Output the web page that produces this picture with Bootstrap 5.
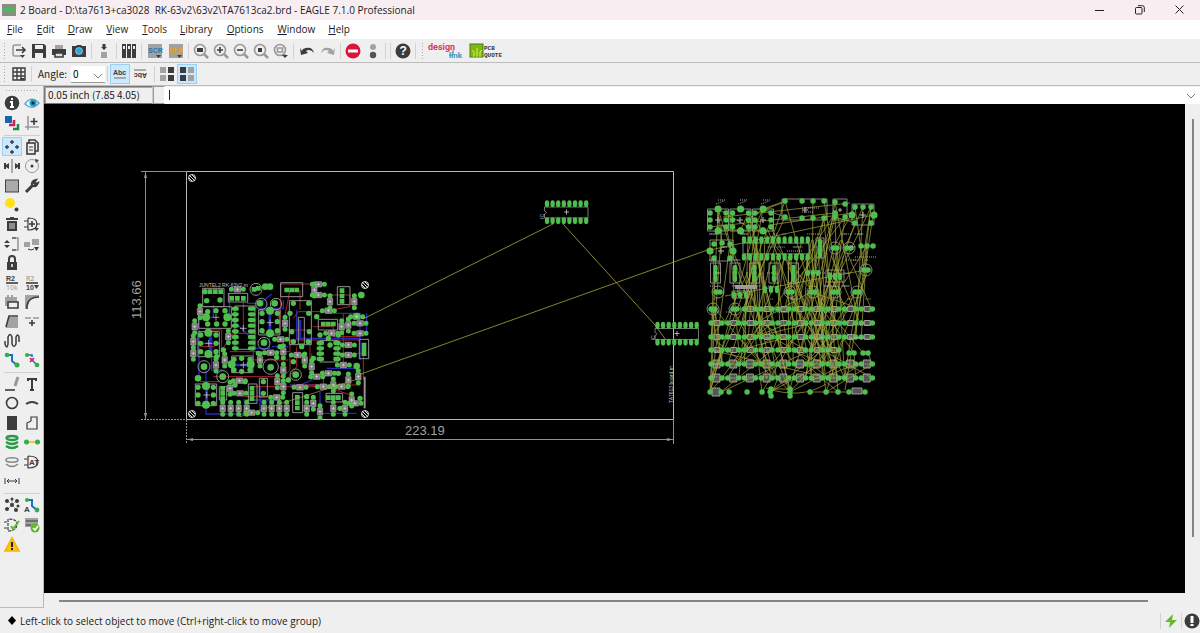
<!DOCTYPE html>
<html lang="en">
<head>
<meta charset="utf-8">
<meta name="viewport" content="width=device-width, initial-scale=1">
<title>2 Board - EAGLE 7.1.0 Professional</title>
<link href="https://cdn.jsdelivr.net/npm/bootstrap@5.3.0/dist/css/bootstrap.min.css" rel="stylesheet">
<style>
body{font-family:"Open Sans","Noto Sans",sans-serif;font-size:10px;line-height:14px;color:#1b1b1b;background:#efefef}
.titlebar{background:#f8eef2;height:20px;font-size:10px;padding-left:2px}
.winbtn{width:40px;height:20px}
.menus{background:#fff;height:19px;font-size:10px;padding:0 0 2px 3px}
.menus button{padding:0 4px;margin-right:6px}
.menus button:nth-child(3n+2){margin-right:5px}
.plain{border:0;background:none;color:inherit;padding:0;display:flex;align-items:center;justify-content:center}
.tools{height:24px;border-bottom:1px solid #bdbdbd;background:#efefef}
.tools.options{height:23px}
.tools .plain{width:20px;height:20px}
.tools .wide{width:21px}
.tools .on,.palette .on{background:#cce8ff;box-shadow:inset 0 0 0 1px #99d1f5}
.split{width:1px;height:16px;background:#d2d2d2;margin:0 2px}
.grip{width:3px;height:18px;margin:0 3px;background:radial-gradient(circle,#aaa 1px,transparent 1px) 0 0/3px 3px}
.gripx{height:3px;margin:3px 3px 0;background:radial-gradient(circle,#aaa 1px,transparent 1px) 0 0/3px 3px}
.palette{width:44px;border-right:1px solid #bbb;border-bottom:1px solid #bbb;padding:0 1px 0 2px}
.group{display:grid;grid-template-columns:1fr 1fr;grid-auto-rows:1fr;margin-top:1px}
.g1{height:40px}.g2{height:233px}.g3{height:117px}.g4{height:60px}
.rule{height:1px;background:#cfcfcf;margin:2px 2px 0}
.jp{font-family:"Noto Sans CJK JP",sans-serif;font-size:10px}
.angle{width:34px;height:17px;border:0;border-bottom:1px solid #999;background:#fff;padding:0 2px;appearance:none;font-size:10px}
.pos{height:18px;width:109px;border:1px solid #777;border-right-color:#ccc;box-shadow:inset 1px 1px #aaa;padding-left:3px;line-height:15px}
.mini{width:12px;height:18px;border:1px solid #999;border-right-color:#fff}
.caret{width:1px;height:10px;background:#222}
.cmd{border:0;outline:0;height:16px;font-size:10px;min-width:0}
.thumbx{height:2px;background:#858585;margin:7px 52px 6px 15px}
.thumby{width:2px;background:#858585;margin:15px 6px 56px 7px}
.status{height:25px}
svg{display:block}
.ic{width:16px;height:16px;fill:none;stroke:#3c3c3c;stroke-width:1.6;overflow:visible}
.f{fill:#3c3c3c;stroke:none}.g{stroke:#999}.gf{fill:#a2a2a2;stroke:none}.n{fill:#2fae4a;stroke:none}.b{stroke:#1d6fc0}.t{stroke:none;font-family:"Liberation Sans",sans-serif;font-weight:700;fill:#3c3c3c}
.pad{stroke:#4fbe4f;fill:none}.out{stroke:#929292;fill:none}.air{stroke:#a5a73c;fill:none}.top{stroke:#a82525;fill:none}.bot{stroke:#2828b4;fill:none}
.dim{fill:#a0a0a0;font:13px "Liberation Sans",sans-serif}
.tiny{fill:#c0c0c0;font:5px "Liberation Sans",sans-serif}
</style>
</head>
<body class="vh-100 d-flex flex-column overflow-hidden">
<header class="titlebar d-flex align-items-center flex-shrink-0">
<svg class="me-1" width="14" height="12" viewBox="0 0 14 12" aria-hidden="true"><rect width="14" height="12" fill="#858f85"/><text x="1" y="8" font-size="6" font-weight="700" fill="#43c743" font-family="Liberation Sans">BRD</text></svg>
<span class="text-nowrap">2 Board - D:\ta7613+ca3028&nbsp; RK-63v2\63v2\TA7613ca2.brd - EAGLE 7.1.0 Professional</span>
<div class="d-flex ms-auto">
<button class="plain winbtn" aria-label="Minimize"><svg width="10" height="10" stroke="#222"><path d="M0 5.500h9"/></svg></button>
<button class="plain winbtn" aria-label="Restore"><svg width="10" height="10" stroke="#222" fill="none"><rect x=".5" y="2.500" width="6.500" height="6.500" rx="1"/><path d="M3 .7h4.500q1.800 0 1.800 1.800V7"/></svg></button>
<button class="plain winbtn" aria-label="Close"><svg width="10" height="10" stroke="#222"><path d="M.5 .5l8 8M8.500 .5l-8 8"/></svg></button>
</div>
</header>
<nav class="menus d-flex align-items-center flex-shrink-0">
<button class="plain"><span><u>F</u>ile</span></button><button class="plain"><span><u>E</u>dit</span></button><button class="plain"><span><u>D</u>raw</span></button><button class="plain"><span><u>V</u>iew</span></button><button class="plain"><span><u>T</u>ools</span></button><button class="plain"><span><u>L</u>ibrary</span></button><button class="plain"><span><u>O</u>ptions</span></button><button class="plain"><span><u>W</u>indow</span></button><button class="plain"><span><u>H</u>elp</span></button>
</nav>
<div class="tools d-flex align-items-center flex-shrink-0" role="toolbar">
<i class="grip"></i>
<button class="plain" aria-label="Open"><svg class="ic" viewBox="0 0 16 16"><path class="g" d="M10 2H4q-2 0-2 2v7q0 2 2 2h6"/><path d="M5 7h8M11 4l3 3-3 3"/><path class="f" d="M9 12h5l-2.500 3z"/></svg></button>
<button class="plain" aria-label="Save"><svg class="ic" viewBox="0 0 16 16"><path class="f" d="M1 1h12l2 2v12H1z"/><path d="M4 2h8v4H4zM4 10h8v5H4z" fill="#eee" stroke="none"/></svg></button>
<button class="plain" aria-label="Print"><svg class="ic" viewBox="0 0 16 16"><path class="gf" d="M4 2h8v4H4z"/><path class="f" d="M1 6h14v6H1z"/><path d="M4 10h8v4H4z" fill="#ddd"/></svg></button>
<button class="plain" aria-label="CAM"><svg class="ic" viewBox="0 0 16 16"><path class="f" d="M1 3h4l1-1h4l1 1h4v11H1z"/><circle cx="8" cy="8" r="3.500" fill="#27a8e0" stroke="#eee" stroke-width=".5"/></svg></button>
<i class="split"></i>
<button class="plain" aria-label="Switch to schematic"><svg class="ic" viewBox="0 0 16 16"><path class="gf" d="M5 9h6v6H5z"/><path class="f" d="M6.500 1h3v3H11L8 7 5 4h1.500z"/></svg></button>
<i class="split"></i>
<button class="plain" aria-label="Use library"><svg class="ic" viewBox="0 0 16 16"><path class="f" d="M1 1h4v14H1zM6 1h4v14H6zM11 1h4v14h-4z"/><path d="M3 3v3M8 3v3M13 3v3" stroke="#eee" stroke-width="2"/></svg></button>
<i class="split"></i>
<button class="plain wide" aria-label="Script"><svg class="ic" viewBox="0 0 16 16"><path class="gf" d="M1 1h14v14H1z"/><text class="t" x="1" y="10" font-size="7" style="fill:#2277b0">SCR</text><path class="f" d="M9 12h5l-2.500 3z"/></svg></button>
<button class="plain wide" aria-label="ULP"><svg class="ic" viewBox="0 0 16 16"><path class="gf" d="M1 1h14v14H1z"/><text class="t" x="1" y="10" font-size="7" style="fill:#f09a20">ULP</text><path class="f" d="M9 12h5l-2.500 3z"/></svg></button>
<i class="split"></i>
<button class="plain" aria-label="Fit"><svg class="ic" viewBox="0 0 16 16"><circle class="g" cx="7" cy="7" r="5.500"/><path class="g" d="M11 11l4 4" stroke-width="2.500"/><path class="f" d="M4 5h6v4H4z"/></svg></button>
<button class="plain" aria-label="Zoom in"><svg class="ic" viewBox="0 0 16 16"><circle class="g" cx="7" cy="7" r="5.500"/><path class="g" d="M11 11l4 4" stroke-width="2.500"/><path d="M4 7h6M7 4v6"/></svg></button>
<button class="plain" aria-label="Zoom out"><svg class="ic" viewBox="0 0 16 16"><circle class="g" cx="7" cy="7" r="5.500"/><path class="g" d="M11 11l4 4" stroke-width="2.500"/><path d="M4 7h6"/></svg></button>
<button class="plain" aria-label="Redraw"><svg class="ic" viewBox="0 0 16 16"><circle class="g" cx="7" cy="7" r="5.500"/><path class="g" d="M11 11l4 4" stroke-width="2.500"/><path class="f" d="M5 5h4v4H5z"/></svg></button>
<button class="plain" aria-label="Select area"><svg class="ic" viewBox="0 0 16 16"><circle class="g" cx="7" cy="7" r="5.500"/><path class="g" d="M4.500 5h5v4h-5zM11 11l2 2"/><path class="f" d="M9 12h6l-3 3z"/></svg></button>
<i class="split"></i>
<button class="plain wide" aria-label="Undo"><svg class="ic" viewBox="0 0 16 16"><path class="f" d="M1 5l1 7 7-2-2-2q4-3 8 2-2-8-11-4L3 8z"/></svg></button>
<button class="plain wide" aria-label="Redo"><svg class="ic" viewBox="0 0 16 16"><path class="gf" d="M15 5l-1 7-7-2 2-2Q5 5 1 10q2-8 11-4l1 2z"/></svg></button>
<i class="split"></i>
<button class="plain" aria-label="Stop"><svg class="ic" viewBox="0 0 16 16"><circle cx="8" cy="8" r="7.500" fill="#dc143c" stroke="none"/><path d="M3 8h10" stroke="#fff" stroke-width="3"/></svg></button>
<button class="plain" aria-label="Go"><svg class="ic" viewBox="0 0 16 16"><circle class="gf" cx="8" cy="4" r="3"/><circle cx="8" cy="12" r="3.200" fill="#555" stroke="none"/></svg></button>
<i class="split"></i><i class="split"></i>
<button class="plain" aria-label="Help"><svg class="ic" viewBox="0 0 16 16"><circle class="f" cx="8" cy="8" r="7.500"/><text class="t" x="4.500" y="12" font-size="12" style="fill:#fff">?</text></svg></button>
<i class="split"></i><i class="grip"></i>
<a href="#" class="me-1" aria-label="design link"><svg width="38" height="20" viewBox="0 0 38 20" font-family="Roboto" font-weight="700"><text x="1" y="9" font-size="9" fill="#d63a60">design</text><path d="M26 9v5h-4" stroke="#d63a60" fill="none"/><text x="22" y="17" font-size="8" fill="#3c9abf">link</text></svg></a>
<a href="#" aria-label="PCB quote"><svg width="34" height="16" viewBox="0 0 34 16"><rect x="1" y="1" width="13" height="13" fill="#7cba10" stroke="#3e7a20"/><path d="M5 14V9L3 7M8 14V5M11 14V9l2-2" stroke="#e6ef55" fill="none"/><text x="15" y="7" font-size="6" font-family="Liberation Mono" font-weight="700" fill="#333">PCB</text><text x="15" y="14" font-size="6" font-family="Liberation Mono" font-weight="700" fill="#333">QUOTE</text></svg></a>
</div>
<div class="tools options d-flex align-items-center flex-shrink-0 jp" role="toolbar">
<i class="grip"></i>
<button class="plain" aria-label="Grid"><svg class="ic" viewBox="0 0 16 16"><path d="M2 2h12v12H2zM6 2v12M10 2v12M2 6h12M2 10h12" stroke-width="1.400"/><path class="f" d="M9 12h5l-2.500 3z"/></svg></button>
<i class="split"></i>
<label for="angle" class="ms-1 me-1">Angle:</label>
<div class="position-relative"><select id="angle" class="angle jp"><option>0</option></select><svg class="position-absolute end-0 top-50" width="12" height="5" fill="none" stroke="#777" aria-hidden="true"><path d="M1 0l4 4 4-4"/></svg></div>
<i class="split"></i>
<button class="plain on" aria-label="Text upright"><svg class="ic" viewBox="0 0 16 16"><text class="t" x="1" y="9" font-size="7">Abc</text><path class="g" d="M2 12h12"/></svg></button>
<button class="plain" aria-label="Spin text"><svg class="ic" viewBox="0 0 16 16"><text class="t" x="-15" y="-7" font-size="7" transform="rotate(180)">Abc</text><path class="g" d="M2 4h12"/></svg></button>
<i class="split ms-1"></i>
<button class="plain" aria-label="Mirror off"><svg class="ic" viewBox="0 0 16 16"><path class="gf" d="M1 1h6v6H1zM1 9h6v6H1z"/><path class="f" d="M9 1h6v6H9zM9 9h6v6H9z"/></svg></button>
<button class="plain on" aria-label="Mirror on"><svg class="ic" viewBox="0 0 16 16"><path class="f" d="M1 1h6v6H1zM1 9h6v6H1z"/><path class="gf" d="M9 1h6v6H9zM9 9h6v6H9z"/></svg></button>
</div>
<main class="d-flex flex-grow-1 overflow-hidden">
<aside class="palette flex-shrink-0">
<div class="gripx"></div>
<div class="group g1">
<button class="plain" aria-label="Info"><svg class="ic" viewBox="0 0 16 16"><circle class="f" cx="8" cy="8" r="7.300"/><path d="M8 3v2M6 7h2v5M6 12h4" stroke="#fff" stroke-width="2"/></svg></button>
<button class="plain" aria-label="Show"><svg class="ic" viewBox="0 0 16 16"><path d="M1 9q6-9 14-1-7 8-14 1z" fill="#fff" stroke="#67a9c8"/><circle cx="9" cy="8" r="3.500" fill="#1a9bd0" stroke="none"/><circle cx="9" cy="8" r="1.500" fill="#123" stroke="none"/></svg></button>
<button class="plain" aria-label="Display"><svg class="ic" viewBox="0 0 16 16"><path d="M1 1h7v7H1z" fill="#1763aa" stroke="none"/><path d="M10 5v5H5" stroke="#d41c50" stroke-width="2.500"/><path d="M14 9v5H9" stroke="#178b44" stroke-width="2.500"/></svg></button>
<button class="plain" aria-label="Mark"><svg class="ic" viewBox="0 0 16 16"><path class="g" d="M4 1v14M1 12h14"/><path d="M10 3v7M6.500 6.500h7"/></svg></button>
</div>
<div class="rule"></div>
<div class="group g2">
<button class="plain on" aria-label="Move"><svg class="ic" viewBox="0 0 16 16"><path d="M8 1v4M6 3h4M8 11v4M6 13h4M1 8h4M3 6v4M11 8h4M13 6v4" stroke-width="1.400"/></svg></button>
<button class="plain" aria-label="Copy"><svg class="ic" viewBox="0 0 16 16"><path d="M5 4V1h6l3 3v8h-3"/><rect x="3" y="4" width="8" height="11"/><path d="M5 8h4M5 11h4" stroke-width="1"/></svg></button>
<button class="plain" aria-label="Mirror"><svg class="ic" viewBox="0 0 16 16"><path class="g" d="M8 1v14"/><path class="f" d="M0 5h2v2l3-2v6L2 9v2H0zM16 5h-2v2l-3-2v6l3-2v2h2z"/></svg></button>
<button class="plain" aria-label="Rotate"><svg class="ic" viewBox="0 0 16 16"><circle class="g" cx="8" cy="8" r="6.500" stroke-width="1"/><circle class="f" cx="8" cy="8" r="1.500"/><path class="f" d="M11 1l4 1-3 3z"/></svg></button>
<button class="plain" aria-label="Group"><svg class="ic" viewBox="0 0 16 16"><rect x="1.500" y="2" width="13" height="12" fill="#aaa" stroke="#444" stroke-width="1"/></svg></button>
<button class="plain" aria-label="Change"><svg class="ic" viewBox="0 0 16 16"><path d="M2 14l7-7" stroke-width="3"/><path d="M14 5q-2 5-6 2-1-4 4-5l-2 3 1 1z" stroke-width="2"/></svg></button>
<button class="plain" aria-label="Paste"><svg class="ic" viewBox="0 0 16 16"><circle cx="6" cy="6" r="5" fill="#ffdf20" stroke="none"/><circle class="f" cx="12.500" cy="12.500" r="2"/></svg></button><span></span>
<button class="plain" aria-label="Delete"><svg class="ic" viewBox="0 0 16 16"><path class="f" d="M3 5h10v10H3zM2 2h12v2H2zM6 1h4v2H6z"/><path d="M6 7v6M8 7v6M10 7v6" stroke="#ddd" stroke-width="1"/></svg></button>
<button class="plain" aria-label="Add"><svg class="ic" viewBox="0 0 16 16"><path d="M4 2v12q9 0 9-6T4 2M0 5h4M0 11h4M12 8h4" stroke-width="1.200"/><path d="M8 5v6M5 8h6"/><path class="f" d="M10 12h5l-2.500 3z"/></svg></button>
<button class="plain" aria-label="Pinswap"><svg class="ic" viewBox="0 0 16 16"><path class="f" d="M0 7l3-3 3 3zM0 9l3 3 3-3z"/><path class="g" d="M8 2h6v12H8"/><path d="M8 2h4M8 14h4" stroke-width="1"/></svg></button>
<button class="plain" aria-label="Replace"><svg class="ic" viewBox="0 0 16 16"><path class="gf" d="M0 6h6v5H0zM8 3h7v6H8z"/><path d="M4 13q3 2 6 0" stroke-width="1"/><path class="f" d="M10 11h5l-2.500 4z"/></svg></button>
<button class="plain" aria-label="Lock"><svg class="ic" viewBox="0 0 16 16"><path d="M5 8V4q0-3 3-3t3 3v4" stroke-width="2"/><path class="f" d="M3 7h10v8H3z"/><path d="M8 9v3" stroke="#eee"/></svg></button><span></span>
<button class="plain" aria-label="Name"><svg class="ic" viewBox="0 0 16 16"><text class="t" x="2" y="6" font-size="7">R2</text><path d="M2 8h12"/><text x="2" y="15" font-size="7" fill="#999" stroke="none">10k</text></svg></button>
<button class="plain" aria-label="Value"><svg class="ic" viewBox="0 0 16 16"><text x="2" y="6" font-size="7" fill="#888" stroke="none">R2</text><path d="M2 8h12"/><text class="t" x="2" y="15" font-size="7">10</text><path class="f" d="M10 10h5l-2.500 4z"/></svg></button>
<button class="plain" aria-label="Smash"><svg class="ic" viewBox="0 0 16 16"><path class="gf" d="M1 3h12v9H1zM3 1h2v2H3zM7 1h2v2H7z"/><path d="M4 8h10v6H4z" fill="#eee"/></svg></button>
<button class="plain" aria-label="Miter"><svg class="ic" viewBox="0 0 16 16"><path class="gf" d="M1 1h14v2Q4 3 3 15H1z"/><path d="M3 15V12Q4 3 15 3"/></svg></button>
<button class="plain" aria-label="Split"><svg class="ic" viewBox="0 0 16 16"><path class="gf" d="M5 4h9v11H2z"/><path d="M2 14L5 3l9 0"/></svg></button>
<button class="plain" aria-label="Optimize"><svg class="ic" viewBox="0 0 16 16"><path class="g" d="M1 5h6M9 5h6"/><path d="M8 7v6M5 10h6"/></svg></button>
<button class="plain" aria-label="Meander"><svg class="ic" viewBox="0 0 16 16"><path d="M1 8v3q2 6 3 0V4q2-5 4 0v7q2 5 4 0V4q2-4 3 0v5" stroke-width="1.500"/></svg></button><span></span>
<button class="plain" aria-label="Route"><svg class="ic" viewBox="0 0 16 16"><path class="b" d="M3 3h5v6l5 4" stroke-width="2"/><circle class="n" cx="3" cy="3" r="2.300"/><circle class="n" cx="13" cy="13" r="2.500"/></svg></button>
<button class="plain" aria-label="Ripup"><svg class="ic" viewBox="0 0 16 16"><path class="b" d="M3 3h5v2M10 10l3 3"/><path d="M6 6l4 4M10 6l-4 4" stroke="#d41c50"/><circle class="n" cx="3" cy="3" r="2"/><circle class="n" cx="13" cy="13" r="2.300"/></svg></button>
</div>
<div class="rule"></div>
<div class="group g3">
<button class="plain" aria-label="Line"><svg class="ic" viewBox="0 0 16 16"><path d="M1 14h10"/><path class="g" d="M11 10l3-9" stroke-width="3"/></svg></button>
<button class="plain" aria-label="Text"><svg class="ic" viewBox="0 0 16 16"><path d="M4 5V3h8v2M8 3v11M6 14h4" stroke-width="2"/></svg></button>
<button class="plain" aria-label="Circle"><svg class="ic" viewBox="0 0 16 16"><circle cx="8" cy="8" r="5.500"/></svg></button>
<button class="plain" aria-label="Arc"><svg class="ic" viewBox="0 0 16 16"><path d="M2 9q6-4 12 0" stroke-width="2"/></svg></button>
<button class="plain" aria-label="Rectangle"><svg class="ic" viewBox="0 0 16 16"><path class="f" d="M3 1h10v14H3z"/></svg></button>
<button class="plain" aria-label="Polygon"><svg class="ic" viewBox="0 0 16 16"><path d="M3 14V8l4-2V2h6v12z" stroke-width="1.200"/></svg></button>
<button class="plain" aria-label="Via"><svg class="ic" viewBox="0 0 16 16"><g stroke="#2b9a4b" stroke-width="2.300"><ellipse cx="8" cy="4" rx="5.500" ry="2"/><path d="M2 8q6 4 12 0M2 12q6 4 12 0"/></g></svg></button>
<button class="plain" aria-label="Signal"><svg class="ic" viewBox="0 0 16 16"><path d="M3 8h10" stroke="#e6c020"/><circle class="n" cx="2.500" cy="8" r="2.500"/><circle class="n" cx="13.500" cy="8" r="2.500"/></svg></button>
<button class="plain" aria-label="Hole"><svg class="ic" viewBox="0 0 16 16"><g stroke="#888"><ellipse cx="8" cy="6" rx="6" ry="2.200"/><path d="M2 10q6 5 12 0"/></g></svg></button>
<button class="plain" aria-label="Attribute"><svg class="ic" viewBox="0 0 16 16"><path d="M4 2v12q10 0 10-6T4 2M0 5h4M0 11h4" stroke-width="1.200"/><text class="t" x="5" y="11" font-size="8">AT</text></svg></button>
<button class="plain" aria-label="Dimension"><svg class="ic" viewBox="0 0 16 16"><path d="M1 5v6M15 5v6M3 8h10M5 6L3 8l2 2M11 6l2 2-2 2" stroke-width="1"/></svg></button>
</div>
<div class="rule"></div>
<div class="group g4">
<button class="plain" aria-label="Ratsnest"><svg class="ic" viewBox="0 0 16 16"><path d="M3 3l10 10M13 3L3 13M8 2v6" stroke="#aaa" stroke-width="1"/><g class="f"><circle cx="3" cy="4" r="2"/><circle cx="8" cy="8" r="2"/><circle cx="13" cy="4" r="2"/><circle cx="3" cy="12" r="2"/><circle cx="12" cy="13" r="2"/><circle cx="8" cy="2" r="1.500"/><circle cx="14" cy="9" r="1.500"/></g></svg></button>
<button class="plain" aria-label="Autorouter"><svg class="ic" viewBox="0 0 16 16"><path class="b" d="M3 3h5v6l5 4" stroke-width="2"/><circle class="n" cx="3" cy="3" r="2"/><circle class="n" cx="13" cy="13" r="2.400"/><text class="t" x="0" y="15" font-size="8">A</text></svg></button>
<button class="plain" aria-label="ERC"><svg class="ic" viewBox="0 0 16 16"><path d="M4 2v12q8 0 9-6T4 2M0 5h4M0 11h4" stroke-width="1.200" stroke-dasharray="3 1"/><path d="M7 9l2 3 6-8" stroke="#62b62b" stroke-width="2"/></svg></button>
<button class="plain" aria-label="DRC"><svg class="ic" viewBox="0 0 16 16"><path class="gf" d="M1 1h13v9H1z"/><path d="M2 4h12M2 8h5" stroke-width="1"/><circle cx="11" cy="11" r="4.500" fill="#62b62b" stroke="none"/><path d="M9 11l2 2 3-4" stroke="#fff"/></svg></button>
<button class="plain" aria-label="Errors"><svg class="ic" viewBox="0 0 16 16"><path d="M8 1l7 13H1z" fill="#ffc414" stroke="#f5b800"/><path d="M8 5v5M8 11v2" stroke="#222" stroke-width="2"/></svg></button>
</div>
</aside>
<section class="d-flex flex-column flex-grow-1 overflow-hidden">
<div class="d-flex align-items-center flex-shrink-0 jp">
<output class="pos text-nowrap">0.05 inch (7.85 4.05)</output><i class="mini"></i>
<div class="d-flex align-items-center bg-white flex-grow-1 ps-1"><i class="caret"></i><input class="cmd flex-grow-1" aria-label="Command"><button class="plain me-1" aria-label="Command history"><svg width="10" height="17" fill="none" stroke="#777"><path d="M1 7l4 4 4-4"/></svg></button></div>
</div>
<div class="d-flex flex-grow-1 overflow-hidden">
<div class="bg-black flex-grow-1 overflow-hidden">
<svg width="100%" height="100%" viewBox="44 104 1141 489" preserveAspectRatio="xMinYMin meet" role="img" aria-label="Board layout">
<g fill="none" stroke="#8f8f8f">
<path d="M186.500 171.500H673.500V419.500H186.500z" stroke="#b8b8b8"/>
<path d="M141 171.500H186M145.500 172V419M186.500 439.500H673M673.500 420V444"/><path d="M141 419.500H186M186.500 420V444" stroke-dasharray="2 1"/>
<path d="M144 178l1.500-6 1.500 6zM144 413l1.500 6 1.500-6zM193 438l-6 1.500 6 1.500zM667 438l6 1.500-6 1.500z" fill="#999" stroke="none"/></g>
<text class="dim" x="405" y="435">223.19</text><text class="dim" transform="translate(141 319) rotate(-90)">113.66</text>
<text class="tiny" x="199" y="287">JUNTEL2 RK-63V2.m</text><text class="tiny" transform="translate(673 403) rotate(-90)">TA7613 board.m</text>
<g id="holes" fill="#ddd" stroke="#ddd"></g>
<g transform="translate(180 270) scale(.333333)">
<g class="bot" stroke-width="4"><path d="M57 140V330M78 300V432H200M95 200V300H130M148 70V140L220 210V290M200 100h40l35-28M268 110V235H210M100 105V142H70M160 285h60M350 120V205H540M440 130H540V270M330 345H440M395 250V330L350 350M560 130v60M240 350v80M440 295h90M275 230h50M190 390H300M420 365V430H530M240 115h70V90M60 220h60"/><path d="M80 345v60M270 130v60M360 150v60M90 190v60M165 285h40" stroke-width="8"/></g>
<g class="top" stroke-width="3"><path d="M302 42H432M302 42V130L290 150M405 75H510V110L430 125H355L340 145M190 80V180M95 180h30v60l35-50h70M60 230h45M150 245H330V210H540M245 190H300V130M330 250V300L310 320H100M60 335h60M350 230V290L320 330M390 220v80M490 130V290M400 170h60v30h80M210 350h220V300M190 380h100M340 345h90l80 30M320 180h70M215 270h110M130 350v50M490 250h60v80M430 345h110M360 60v60M330 60l-20 100"/></g>
<g class="out" stroke-width="3"><path d="M68 55h64v55H68zM145 70h58v26h-58zM302 38h66v42h-66zM328 92h66v132h-66zM472 50h38v54h-38zM415 148h58v32h-58zM56 110h98v65H56zM54 185h64v75H54zM236 120h64v75h-64zM155 258h64v50h-64zM46 342h64v65H46zM165 108v130h60V108zM420 212h54v64h-54zM538 208h28v58h-28zM205 342h26v58h-26zM338 368h30v60h-30zM238 325h24v56h-24zM438 370h50v26h-50zM118 350h22v40h-22z"/>
<circle cx="228" cy="58" r="18"/><circle cx="244" cy="102" r="17"/><circle cx="288" cy="102" r="17"/><circle cx="252" cy="220" r="18"/><circle cx="272" cy="290" r="23"/><circle cx="72" cy="290" r="18"/><circle cx="128" cy="320" r="18"/><circle cx="347" cy="314" r="17"/><path d="M355 142h18v80h-18z"/><path d="M554 320v95" stroke-width="6"/></g>
<g id="lparts"></g><g class="air" stroke-width="2"><path d="M180 440L540 325"/></g>
</g>
<g id="right"></g>
<g id="chips"></g>
<g class="air" stroke-width=".8"><path d="M553 224L363 319M563 224L655 325L666 340M713 248L361 374"/></g>
</svg>
</div>
<div class="d-flex flex-shrink-0"><div class="thumby"></div></div>
</div>
<div class="thumbx flex-shrink-0"></div>
</section>
</main>
<footer class="status d-flex align-items-center flex-shrink-0 ps-2">
<svg width="8" height="9" viewBox="0 0 8 9" aria-hidden="true"><path d="M4 0l4 4.500L4 9 0 4.500z"/></svg><span class="ms-1">Left-click to select object to move (Ctrl+right-click to move group)</span>
<div class="d-flex align-items-center ms-auto"><i class="split"></i>
<button class="plain" aria-label="Live"><svg class="ic" viewBox="0 0 16 16"><path d="M10 1L2 9h5l-1 6 8-8H9z" fill="#68b82c" stroke="none"/></svg></button><i class="split"></i>
<button class="plain" aria-label="Info"><svg class="ic" viewBox="0 0 16 16"><circle class="f" cx="8" cy="8" r="7.500"/><path d="M8 3v7M8 11v2" stroke="#fff" stroke-width="3"/></svg></button></div>
</footer>
<script src="https://cdn.jsdelivr.net/npm/bootstrap@5.3.0/dist/js/bootstrap.bundle.min.js"></script>
<script>
// Board parts. Groups on a 3x grid use their own scale.
var $ = function(i){ return document.getElementById(i); };
var seed = 7;
function rnd(){ seed = (seed * 16807) % 2147483647; return seed / 2147483647; }
function dots(list, w, cap){
  return '<path class="pad" stroke-width="'+w+'" stroke-linecap="'+(cap||'round')+'" d="'+list.map(function(p){return 'M'+p[0]+' '+p[1]+'h.1';}).join('')+'"/>';
}
function pts(s){ return s.split(' ').map(function(p){ return p.split(',').map(Number); }); }
function pins(x,y,n,step,h,w){
  var d=''; for (var i=0;i<n;i++) d+='M'+(x+i*step)+' '+y+'v'+h;
  return '<path class="pad" stroke-width="'+w+'" stroke-linecap="round" d="'+d+'"/>';
}
$('holes').innerHTML = pts('192,178 192,414 365,285 365,414').map(function(p){
  return '<circle fill="none" cx="'+p[0]+'" cy="'+p[1]+'" r="3.500"/><path d="M'+(p[0]-3)+' '+(p[1]-3)+'l6 6M'+(p[0]-3)+' '+p[1]+'l3 3M'+p[0]+' '+(p[1]-3)+'l3 3"/>';
}).join('');
$('chips').innerHTML = [[547,204],[657.5,325.500]].map(function(c){
  var x=c[0], y=c[1];
  return '<path class="out" stroke-width=".8" d="M'+(x-2.500)+' '+(y+3)+'h43.500v11h-43.500v-4q4-1.500 0-3z"/>'+
    pins(x,y-1.500,8,5.600,2.500,4.300)+pins(x,y+15.500,8,5.600,2.500,4.300)+
    '<path stroke="#ccc" stroke-width=".8" d="M'+(x+17)+' '+(y+8)+'h5M'+(x+19.500)+' '+(y+5.500)+'v5"/><text class="tiny" transform="translate('+(x-3)+' '+(y+15)+') rotate(-90)">IC</text>';
}).join('');

// Placed parts: [x, y, direction] two-pad components
var two = '172,58,h 415,43,h 415,75,h 450,95,v 445,122,h 403,60,v 60,125,v 44,170,v 40,215,v 40,250,v 145,200,v 134,270,v 315,160,v 302,208,h 272,248,h 310,245,v 352,255,h 374,270,v 395,290,v 445,310,h 410,320,h 430,350,h 178,332,h 180,370,h 150,355,v 290,382,h 310,350,v 292,335,v 360,352,h 310,300,v 505,225,h 505,255,h 490,285,h 540,160,h 540,190,h 523,95,v 530,140,h 485,350,h 485,170,v 505,165,v 455,190,h 535,320,v 400,400,v 420,425,v 525,400,h 215,428,h 128,415,v 152,415,v 176,415,v 200,415,v 252,415,v 275,415,v 298,415,v 320,415,v 380,415,v 460,415,v 495,415,v 515,390,v 240,270,v 108,285,v 460,345,v 505,330,v'.split(' ').map(function(s){return s.split(',');});
var pl=[], bodies='', marks='';
two.forEach(function(t){ var x=+t[0], y=+t[1], h=t[2]=='h';
  pl.push(h?[x-18,y]:[x,y-18], h?[x+18,y]:[x,y+18]);
  bodies += h ? 'M'+(x-10)+' '+(y-8)+'h20v16h-20z' : 'M'+(x-8)+' '+(y-10)+'h16v20h-16z';
  marks += 'M'+(x-5)+' '+y+'h10M'+x+' '+(y-5)+'v10';
});
var more = pts('75,65 120,90 80,92 340,100 386,100 330,130 386,130 335,185 388,185 340,215 385,215 83,125 108,122 135,122 83,162 110,162 135,162 62,195 62,220 62,245 108,195 108,220 108,245 246,130 292,130 246,155 292,155 246,182 292,182 162,268 185,265 210,268 162,300 185,304 210,300 54,352 54,375 54,400 100,352 100,375 100,400 250,335 250,370 380,380 400,265 420,195 445,205 475,195 450,225 410,140 475,310 340,275 325,330 195,335 165,345 110,260 130,240 300,230 290,262 235,250 480,415 540,385 365,230');
$('lparts').innerHTML =
  '<path d="'+bodies+'" fill="#7c7c7c" stroke="#aaa" stroke-width="2"/>'+
  dots(pl,15)+dots(more,16)+
  dots(pts('90,65 106,65 122,65 222,58 235,55 320,60 335,60 350,60 486,62 486,78 486,94 430,162 445,162 460,162 155,85 172,85 190,85 552,225 552,238 552,251 445,383 460,383 475,383 352,382 352,398 352,414 216,355 216,370 216,386 128,355 128,370 128,386'),14,'square')+
  dots(pts('78,142 142,142 85,188 85,252 270,122 270,190 155,283 212,283 78,348 78,404'),24)+
  dots(pts('240,100 284,100 252,218 272,292 72,290 128,320 347,314 530,288 544,75 530,138 256,50 270,50 54,325'),20)+
  [0,1,2,3,4,5,6,7].map(function(i){ return '<path class="pad" stroke-width="13" stroke-linecap="round" d="M162 '+(116+i*17)+'h8M210 '+(116+i*17)+'h10"/>'; }).join('')+
  [0,1,2,3].map(function(i){ return '<path class="pad" stroke-width="13" stroke-linecap="round" d="M416 '+(219+i*16)+'h10M466 '+(219+i*16)+'h10"/>'; }).join('')+
  '<path stroke="#ddd" stroke-width="2" d="'+marks+'M98 142h20M108 132v20M76 220h20M86 210v20M260 158h20M270 148v20M180 285h20M190 275v20M70 375h20M80 365v20M180 175h20M190 165v20"/>';

// Unplaced parts in the right-hand block, in board pixels
var P=[], o='', body='', w='', i;
function box(x,y,a,b){ o+='M'+x+' '+y+'h'+a+'v'+b+'h-'+a+'z'; }
[718,740.500,763].forEach(function(x){ box(x-10.500,209,21,22);
  [[0,0],[0,21],[-8,4],[8,4],[-8,11],[8,11],[-8,18],[8,18]].forEach(function(q){P.push([x+q[0],209+q[1]]);}); });
box(710,240,23,21); [[710,251],[733,251],[714,244],[722,243],[730,244],[714,258],[730,258]].forEach(function(p){P.push(p);});
box(782,199,45,21); [[785,201],[802,201],[813,201],[824,201],[785,217],[802,218],[813,218],[824,218]].forEach(function(p){P.push(p);});
box(833,199,14,21); P.push([835,202],[845,204],[835,213],[835,217],[845,217]);
box(852,204,22,21); P.push([852,215],[874,215],[855,207],[863,207],[871,207],[855,223],[871,223]);
var bars='';
for (i=0;i<12;i++) bars += 'M'+(744+i*5.800)+' 238.500v3M'+(744+i*5.800)+' 255.500v3';
box(743,243,66,11);
[715.500,735,754.500,774,793.500].forEach(function(x){ box(x-5,263,10,20); bars+='M'+x+' 267v2M'+x+' 272v2M'+x+' 277v3'; });
box(816,238,8,20); bars+='M820 241v15'; 
[[835,248],[849,248],[866,270],[718,292],[790,292],[813,292],[835,292],[857,292],[713,309],[735,309]].forEach(function(p){ o+='M'+(p[0]-6)+' '+p[1]+'a6 6 0 1 0 12 0a6 6 0 1 0-12 0'; P.push([p[0]-2,p[1]],[p[0]+2,p[1]]); });
P.push([861,246],[867,246],[873,246]); box(826,270,18,12); bars+='M830 275v3M835 275v3M840 275v3M808 272v2M813 272v2M818 272v2M765 288v3M771 288v3M777 288v3M734 294v2M740 294v2M746 294v2'; box(732,291,17,7);
[309,323,337,350,364,378].forEach(function(y,k){
  for(i=0;i<(k==3?8:10);i++){ var x=717+i*16.700; if(k==0&&i<2)continue;
    P.push([x-6,y],[x+5,y]); body+= k>3 ? 'M'+(x-4)+' '+(y-4)+'h7v8h-7z' : 'M'+(x-3)+' '+(y-2.500)+'h6v5h-6z'; }
});
P.push([849,353],[854,353],[863,353],[868,353]);
[710,721,729,747,762,770,790,790,810,826,838,849,865].forEach(function(x){ P.push([x,392]); });
body+='M712 388h8v8h-8zM852 388h10v6h-10z'; P.push([771,389],[771,396],[790,389],[790,396]);
for(i=0;i<240;i++){ var a=P[Math.floor(rnd()*P.length)], b=P[Math.floor(rnd()*P.length)];
  if(Math.abs(a[0]-b[0])<60||i%12==0) w+='M'+a[0]+' '+a[1]+'L'+b[0]+' '+b[1]; }
for(i=0;i<45;i++){ var s=745+rnd()*100; w+='M'+s.toFixed(1)+' '+(240+Math.floor(rnd()*3)*16)+'L'+(s+(rnd()-.5)*60).toFixed(1)+' '+(309+Math.floor(rnd()*6)*14); }
w+='M723 217L850 203M710 250L873 215M763 210L782 203M770 225L852 213M873 215L862 290M862 290L845 390M725 296L866 270M766 388Q800 400 826 384M722 224L711 378M768 230L812 350';
var lab='';
for(i=0;i<130;i++) lab+='M'+(708+rnd()*160).toFixed(1)+' '+(234+Math.floor(rnd()*12)*13)+'h'+(3+Math.floor(rnd()*6));
$('right').innerHTML='<path d="'+body+'" fill="#555" stroke="#aaa" stroke-width=".9"/><path class="out" stroke-width=".9" d="'+o+'"/>'+
 '<path class="air" stroke-width=".7" d="'+w+'"/>'+dots(P,5.400)+
 '<path class="pad" stroke-width="4.300" stroke-linecap="round" d="'+bars+'"/>'+
 dots([[718,209],[740.5,209],[763,209],[718,231],[740.5,231],[763,231],[710,251],[733,251],[852,215],[874,215]],7)+
 '<path d="M735 285h22v4h-22z" fill="#999"/>'+
 '<path stroke="#aaa" stroke-width="1" stroke-dasharray="1 1" d="'+lab+'M716 204l8-3M738 204l8-3M761 204l8-3M718 200h7M740 200h7M763 200h7M787 251h16M802 208h17M802 212h12M855 257h22"/>'+
 '<path stroke="#bbb" d="M715 220h6M718 217v6M737 220h6M740 217v6M760 220h6M763 217v6M718 251h6M721 248v6M802 210h6M805 207v6M860 215h6M863 212v6M838 210h4M840 208v4"/>';
</script>
</body>
</html>
